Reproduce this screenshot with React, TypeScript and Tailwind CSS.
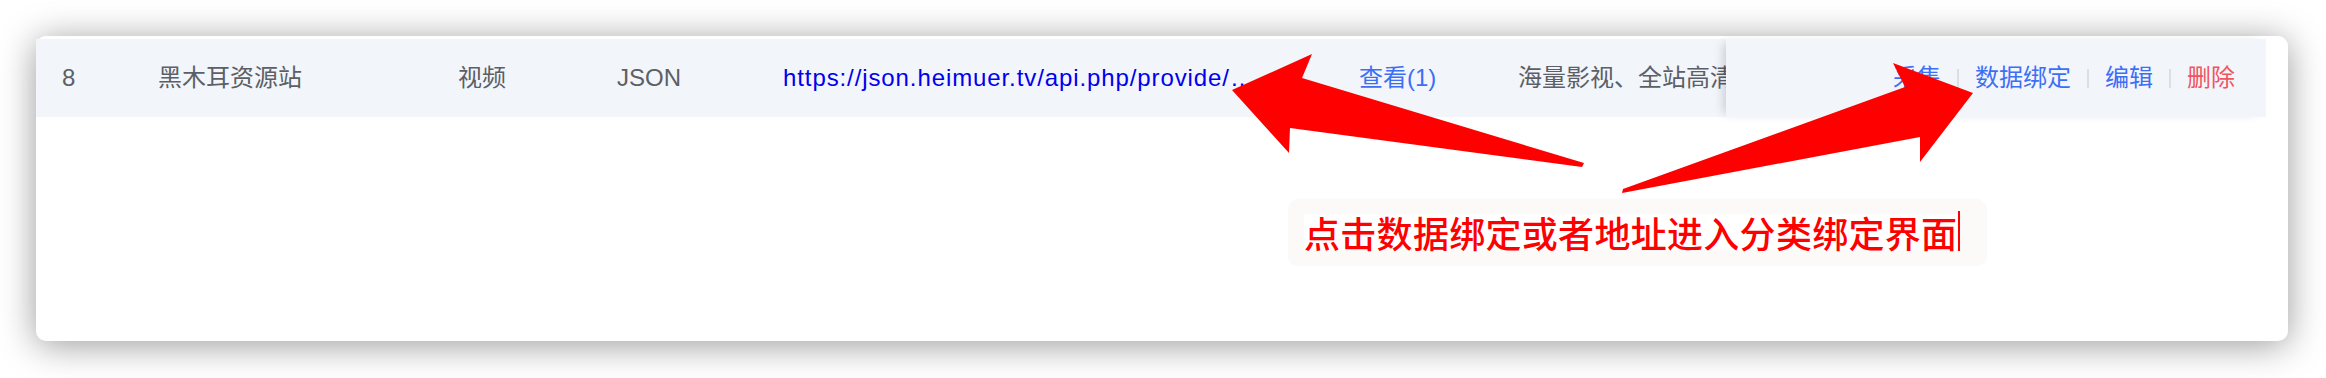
const cell = 'shrink-0 pl-[26px] whitespace-nowrap overflow-hidden';

export default function App() {
  return (
    <div
      className="relative w-full h-[378px] bg-white pt-[36px] pl-[36px] pr-[38px] text-[24px] text-[#5c5f66]"
      style={{ fontFamily: '"Liberation Sans", "Noto Sans CJK SC", sans-serif' }}
    >
      {/* Card */}
      <div className="h-[305px] rounded-[10px] bg-white pt-[3px] pr-[22px] shadow-[0_4px_36px_rgba(0,0,0,0.4)]">
        {/* Row */}
        <div className="flex h-[78px] bg-[#f2f5fa]">
          <div className="flex flex-1 min-w-0 items-center overflow-hidden">
            <div className={`${cell} w-[96px]`}>8</div>
            <div className={`${cell} w-[300px]`}>黑木耳资源站</div>
            <div className={`${cell} w-[159px]`}>视频</div>
            <div className={`${cell} w-[166px]`}>JSON</div>
            <div className={`${cell} w-[576px] pr-[70px]`}>
              <a className="block truncate text-[#0000ee] tracking-[0.9px]">
                https://json.heimuer.tv/api.php/provide/vod/
              </a>
            </div>
            <div className={`${cell} w-[159px] text-[#3d6ff6]`}>查看(1)</div>
            <div className="flex-1 min-w-0 pl-[26px] whitespace-nowrap overflow-hidden">
              海量影视、全站高清播放，资源丰富更新快
            </div>
          </div>
          {/* Fixed action column */}
          <div className="w-[540px] shrink-0 flex items-center justify-end pr-[31px] bg-[#f2f5fa] shadow-[-6px_0_10px_-4px_rgba(0,0,0,0.18)]">
            <span className="text-[#3d6ff6]">采集</span>
            <span className="mx-[16px] h-[19px] w-[2px] bg-[#dcdfe6]" />
            <span className="text-[#3d6ff6]">数据绑定</span>
            <span className="mx-[16px] h-[19px] w-[2px] bg-[#dcdfe6]" />
            <span className="text-[#3d6ff6]">编辑</span>
            <span className="mx-[16px] h-[19px] w-[2px] bg-[#dcdfe6]" />
            <span className="text-[#ef5461]">删除</span>
          </div>
        </div>
      </div>

      {/* Annotation arrows */}
      <svg
        className="absolute left-0 top-0 pointer-events-none"
        width="2326"
        height="378"
        viewBox="0 0 2326 378"
      >
        <polygon
          fill="#ff0000"
          points="1232,90 1312,54 1302,78 1584,163 1582,167 1290,128 1289,153"
        />
        <polygon
          fill="#ff0000"
          points="1973,93 1920,162 1920,137 1622,193 1623,189 1905,87 1893,63"
        />
      </svg>

      {/* Annotation text */}
      <div className="absolute left-[1288px] top-[199px] w-[699px] h-[67px] rounded-[10px] bg-[#fbfaf8] pl-[16px] pt-[15px] flex items-start">
        <span
          className="bg-white text-[#ff0000] text-[36px] leading-[36px] font-medium tracking-[0.3px]"
          style={{ fontFamily: '"Noto Sans CJK SC", sans-serif' }}
        >
          点击数据绑定或者地址进入分类绑定界面
        </span>
        <span className="ml-[1px] -mt-[3px] w-[2px] h-[40px] bg-[#ff0000]" />
      </div>
    </div>
  );
}
